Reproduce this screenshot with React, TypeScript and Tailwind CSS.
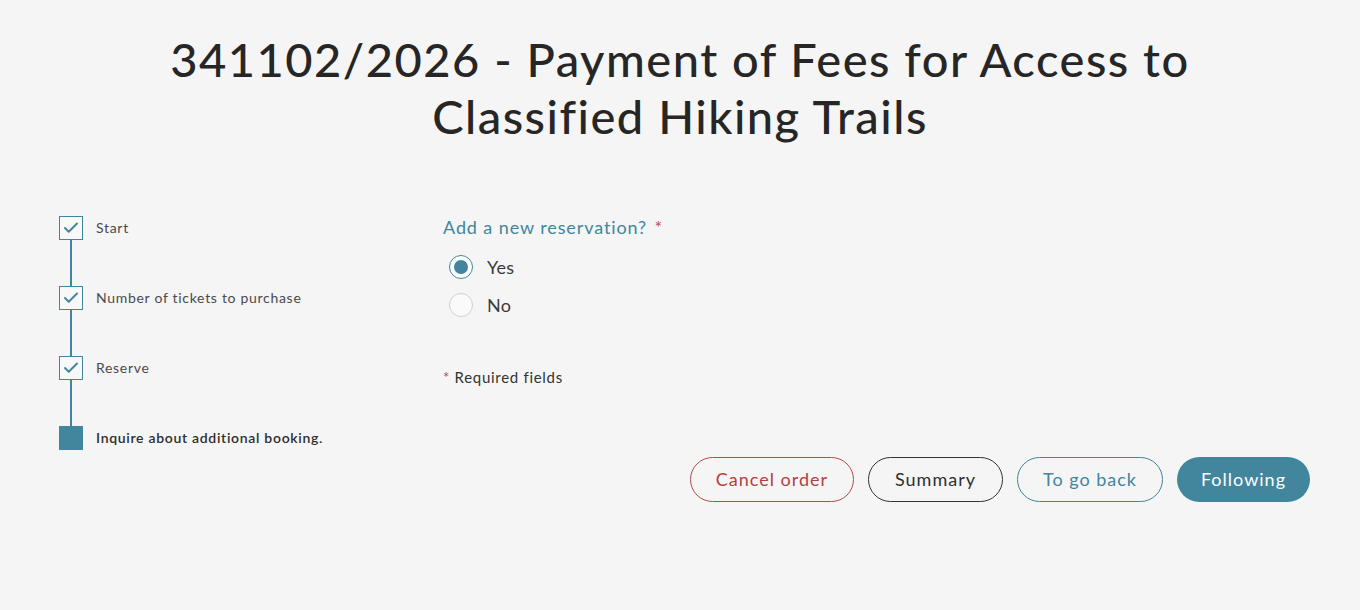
import { Check } from "lucide-react"

const steps = [
  { label: "Start", done: true },
  { label: "Number of tickets to purchase", done: true },
  { label: "Reserve", done: true },
  { label: "Inquire about additional booking.", done: false },
]

export default function App() {
  return (
    <div className="min-h-[610px] w-full bg-[#f5f5f5] text-[#262626] font-['Lato','Noto_Sans',sans-serif]">
      {/* Title */}
      <h1 className="pt-[31px] text-center text-[47px] leading-[57px] font-medium tracking-[1.5px] text-[#262626] px-[150px]">
        341102/2026 - Payment of Fees for Access to Classified Hiking Trails
      </h1>

      <div className="flex mt-[71px] pl-[59px] pr-[50px]">
        {/* Stepper */}
        <div className="w-[384px] shrink-0 flex flex-col">
          {steps.map((s, i) => (
            <div key={s.label} className="flex items-start gap-[13px]">
              <div className="flex flex-col items-center w-[24px]">
                {s.done ? (
                  <div className="w-[24px] h-[24px] border-[1.5px] border-[#41869c] bg-[#f8f8f8] flex items-center justify-center">
                    <Check className="w-[18px] h-[18px] text-[#41869c]" strokeWidth={2.6} />
                  </div>
                ) : (
                  <div className="w-[24px] h-[24px] bg-[#41869c]" />
                )}
                {i < steps.length - 1 && <div className="w-[2px] h-[46px] bg-[#41869c]" />}
              </div>
              <span
                className={`text-[14px] leading-[24px] ${
                  s.done ? "text-[#4a4a4a] tracking-[0.7px]" : "text-[#2e2e2e] font-semibold tracking-[0.7px]"
                }`}
              >
                {s.label}
              </span>
            </div>
          ))}
        </div>

        {/* Form */}
        <div className="flex-1 flex flex-col -mt-[1px]">
          <div className="text-[18px] leading-[24px] text-[#41869c] tracking-[0.9px]">
            Add a new reservation? <span className="text-[#c04848] ml-[2px]">*</span>
          </div>
          <div className="mt-[16px] flex flex-col gap-[14px] pl-[6px]">
            <label className="flex items-center gap-[14px]">
              <span className="w-[24px] h-[24px] rounded-full border-[1.5px] border-[#41869c] bg-white flex items-center justify-center">
                <span className="w-[14px] h-[14px] rounded-full bg-[#41869c]" />
              </span>
              <span className="text-[18px] leading-[24px] text-[#3a3a3a] tracking-[0.3px]">Yes</span>
            </label>
            <label className="flex items-center gap-[14px]">
              <span className="w-[24px] h-[24px] rounded-full border-[1.5px] border-[#cfcfcf] bg-[#fafafa]" />
              <span className="text-[18px] leading-[24px] text-[#3a3a3a] tracking-[0.3px]">No</span>
            </label>
          </div>
          <div className="mt-[50px] text-[15px] leading-[20px] text-[#333] tracking-[0.7px]">
            <span className="text-[#c04848]">*</span> Required fields
          </div>

          <div className="mt-[70px] flex justify-end gap-[14px]">
            <button className="h-[45px] w-[164px] rounded-full border border-[#b84a4a] text-[#b34040] text-[18px] tracking-[1px]">
              Cancel order
            </button>
            <button className="h-[45px] w-[135px] rounded-full border border-[#333] text-[#2e2e2e] text-[18px] tracking-[1px]">
              Summary
            </button>
            <button className="h-[45px] w-[146px] rounded-full border border-[#41869c] text-[#41869c] text-[18px] tracking-[1px]">
              To go back
            </button>
            <button className="h-[45px] w-[133px] rounded-full bg-[#41869c] text-white text-[18px] tracking-[1px]">
              Following
            </button>
          </div>
        </div>
      </div>
    </div>
  )
}
